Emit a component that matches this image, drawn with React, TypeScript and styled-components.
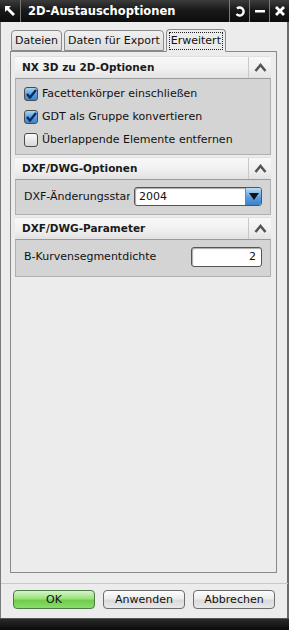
import React from 'react';
import styled, { createGlobalStyle } from 'styled-components';

const Global = createGlobalStyle`
  body {
    margin: 0;
    background: #ececec;
    font-family: "DejaVu Sans", "Liberation Sans", sans-serif;
  }
`;

const Window = styled.div`
  width: 289px;
  height: 630px;
  box-sizing: border-box;
  display: flex;
  flex-direction: column;
  background: #ececec;
  border-left: 1px solid #7a7a7a;
  border-right: 2px solid #6a6a6a;
`;

const TitleBar = styled.div`
  height: 22px;
  flex-shrink: 0;
  display: flex;
  align-items: stretch;
  background: linear-gradient(#3c3c3c, #1a1a1a 45%, #0c0c0c);
  margin: 0 -2px 0 -1px;
  color: #fff;
`;

const TitleIcon = styled.div`
  width: 20px;
  display: flex;
  align-items: center;
  justify-content: center;
  border-right: 1px solid #777;
`;

const Title = styled.div`
  flex: 1;
  padding-left: 7px;
  font-size: 11.5px;
  font-weight: bold;
  line-height: 22px;
`;

const TitleButton = styled.div`
  width: 19px;
  display: flex;
  align-items: center;
  justify-content: center;
  border-left: 1px solid #7a7a7a;
`;

const Body = styled.div`
  flex: 1;
  display: flex;
  flex-direction: column;
  padding: 7px 10px 0 9px;
`;

const TabRow = styled.div`
  display: flex;
  align-items: flex-end;
  height: 22px;
  padding-left: 1px;
  gap: 2px;
  position: relative;
  z-index: 1;
`;

const Tab = styled.div<{ $active?: boolean }>`
  height: ${(p) => (p.$active ? 23 : 21)}px;
  box-sizing: border-box;
  padding: 0 ${(p) => (p.$active ? 3 : 3)}px;
  display: flex;
  align-items: center;
  font-size: 11px;
  color: #111;
  border: 1px solid #8a8a8a;
  border-bottom: ${(p) => (p.$active ? '1px solid #ececec' : '1px solid #8a8a8a')};
  border-radius: 4px 4px 0 0;
  background: ${(p) =>
    p.$active ? '#ececec' : 'linear-gradient(#f0f0f0, #dcdcdc)'};
  margin-bottom: ${(p) => (p.$active ? '-1px' : '0')};
`;

const FocusText = styled.span`
  outline: 1px dotted #222;
  padding: 1px 1px 2px;
`;

const TabPanel = styled.div`
  height: 522px;
  box-sizing: border-box;
  border: 1px solid #8a8a8a;
  padding: 4px 5px 4px 4px;
  display: flex;
  flex-direction: column;
  gap: 2px;
`;

const Section = styled.div`
  display: flex;
  flex-direction: column;
`;

const SectionHeader = styled.div`
  height: 21px;
  display: flex;
  background: linear-gradient(#f8f8f8, #f0f0f0 55%, #e2e2e2);
  border-top: 1px solid #e0e0e0;
`;

const SectionTitle = styled.div`
  flex: 1;
  padding-left: 7px;
  font-size: 10.5px;
  font-weight: bold;
  line-height: 21px;
  color: #1a1a1a;
`;

const Collapse = styled.div`
  width: 22px;
  border-left: 1px solid #c8c8c8;
  display: flex;
  align-items: center;
  justify-content: center;
`;

const SectionBody = styled.div<{ $h: number }>`
  height: ${(p) => p.$h}px;
  box-sizing: border-box;
  background: #d4d4d4;
  border: 1px solid #b0b0b0;
  border-top-color: #9a9a9a;
  padding: 7px 8px;
  display: flex;
  flex-direction: column;
  gap: 8px;
`;

const CheckRow = styled.label`
  display: flex;
  align-items: center;
  gap: 4px;
  height: 15px;
  font-size: 11px;
  color: #111;
`;

const Box = styled.span<{ $checked?: boolean }>`
  width: 14px;
  height: 14px;
  box-sizing: border-box;
  border: 1px solid #4c4c4c;
  border-radius: 3px;
  display: flex;
  align-items: center;
  justify-content: center;
  background: ${(p) =>
    p.$checked
      ? 'linear-gradient(#a8d4f6, #5aa0e0 50%, #3d84cc)'
      : 'linear-gradient(#fafafa, #d8d8d8)'};
`;

const FieldRow = styled.div`
  display: flex;
  align-items: center;
  justify-content: space-between;
  font-size: 11px;
  color: #111;
  height: 19px;
`;

const Label = styled.span`
  white-space: nowrap;
  overflow: hidden;
  width: 106px;
`;

const Select = styled.div`
  width: 128px;
  height: 19px;
  box-sizing: border-box;
  border: 1px solid #555;
  border-radius: 3px;
  background: #fff;
  display: flex;
  align-items: center;
  padding-left: 4px;
  box-shadow: inset 1px 1px 1px #aaa;
`;

const SelectValue = styled.span`
  flex: 1;
  font-size: 11px;
`;

const Arrow = styled.div`
  width: 15px;
  height: 17px;
  background: linear-gradient(#bcdcf8, #5a9ede 55%, #3c80c8);
  border-left: 1px solid #6688aa;
  border-radius: 0 2px 2px 0;
  display: flex;
  align-items: center;
  justify-content: center;
`;

const NumberInput = styled.div`
  width: 71px;
  height: 20px;
  box-sizing: border-box;
  border: 1px solid #555;
  border-radius: 3px;
  background: #fff;
  text-align: right;
  padding-right: 5px;
  font-size: 11px;
  line-height: 18px;
  box-shadow: inset 1px 1px 1px #aaa;
`;

const Separator = styled.div`
  height: 1px;
  background: #fafafa;
  border-top: 1px solid #c8c8c8;
  margin: 10px 0 0 -9px;
  width: 287px;
  box-sizing: border-box;
`;

const Footer = styled.div`
  display: flex;
  gap: 8px;
  padding: 6px 0 0 3px;
`;

const Button = styled.div<{ $primary?: boolean }>`
  width: 82px;
  height: 19px;
  box-sizing: border-box;
  border: 1px solid ${(p) => (p.$primary ? '#4e7a46' : '#6c6c6c')};
  border-radius: 4px;
  display: flex;
  align-items: center;
  justify-content: center;
  font-size: 11px;
  color: #111;
  background: ${(p) =>
    p.$primary
      ? 'linear-gradient(#d6f5c8, #9be07e 45%, #6fcd4c 55%, #8adc6a)'
      : 'linear-gradient(#fdfdfd, #ececec 45%, #dadada 55%, #e8e8e8)'};
`;

const BottomBar = styled.div`
  height: 11px;
  margin: 9px -2px 0 -1px;
  background: linear-gradient(#2a2a2a, #0a0a0a);
  border-top: 1px solid #555;
`;

const Check = () => (
  <svg width="11" height="10" viewBox="0 0 11 10">
    <path d="M1 5 L4 8.5 L10 1" stroke="#0b2b5a" strokeWidth="2.4" fill="none" />
  </svg>
);

const Chevron = () => (
  <svg width="13" height="9" viewBox="0 0 13 9">
    <path d="M1.5 8 L6.5 2 L11.5 8" stroke="#555" strokeWidth="2.6" fill="none" />
  </svg>
);

export default function App() {
  return (
    <>
      <Global />
      <Window>
        <TitleBar>
          <TitleIcon>
            <svg width="12" height="12" viewBox="0 0 12 12">
              <path d="M1 1 L7 1 L5 3 L11 9 L9 11 L3 5 L1 7 Z" fill="#fff" />
            </svg>
          </TitleIcon>
          <Title>2D-Austauschoptionen</Title>
          <TitleButton>
            <svg width="12" height="12" viewBox="0 0 12 12">
              <path d="M3 3.5 A4 4 0 1 1 2.5 9" stroke="#fff" strokeWidth="2.4" fill="none" />
            </svg>
          </TitleButton>
          <TitleButton>
            <svg width="12" height="12" viewBox="0 0 12 12">
              <rect x="1" y="5" width="10" height="2.5" fill="#fff" />
            </svg>
          </TitleButton>
          <TitleButton>
            <svg width="12" height="12" viewBox="0 0 12 12">
              <path d="M2 2 L10 10 M10 2 L2 10" stroke="#fff" strokeWidth="2.8" />
            </svg>
          </TitleButton>
        </TitleBar>
        <Body>
          <TabRow>
            <Tab>Dateien</Tab>
            <Tab>Daten für Export</Tab>
            <Tab $active>
              <FocusText>Erweitert</FocusText>
            </Tab>
          </TabRow>
          <TabPanel>
            <Section>
              <SectionHeader>
                <SectionTitle>NX 3D zu 2D-Optionen</SectionTitle>
                <Collapse><Chevron /></Collapse>
              </SectionHeader>
              <SectionBody $h={77}>
                <CheckRow>
                  <Box $checked><Check /></Box>
                  Facettenkörper einschließen
                </CheckRow>
                <CheckRow>
                  <Box $checked><Check /></Box>
                  GDT als Gruppe konvertieren
                </CheckRow>
                <CheckRow>
                  <Box />
                  Überlappende Elemente entfernen
                </CheckRow>
              </SectionBody>
            </Section>
            <Section>
              <SectionHeader>
                <SectionTitle>DXF/DWG-Optionen</SectionTitle>
                <Collapse><Chevron /></Collapse>
              </SectionHeader>
              <SectionBody $h={36}>
                <FieldRow>
                  <Label>DXF-Änderungsstand</Label>
                  <Select>
                    <SelectValue>2004</SelectValue>
                    <Arrow>
                      <svg width="10" height="7" viewBox="0 0 10 7">
                        <path d="M0 0 L10 0 L5 7 Z" fill="#111" />
                      </svg>
                    </Arrow>
                  </Select>
                </FieldRow>
              </SectionBody>
            </Section>
            <Section>
              <SectionHeader>
                <SectionTitle>DXF/DWG-Parameter</SectionTitle>
                <Collapse><Chevron /></Collapse>
              </SectionHeader>
              <SectionBody $h={38}>
                <FieldRow>
                  <span>B-Kurvensegmentdichte</span>
                  <NumberInput>2</NumberInput>
                </FieldRow>
              </SectionBody>
            </Section>
          </TabPanel>
          <Separator />
          <Footer>
            <Button $primary>OK</Button>
            <Button>Anwenden</Button>
            <Button>Abbrechen</Button>
          </Footer>
        </Body>
        <BottomBar />
      </Window>
    </>
  );
}
